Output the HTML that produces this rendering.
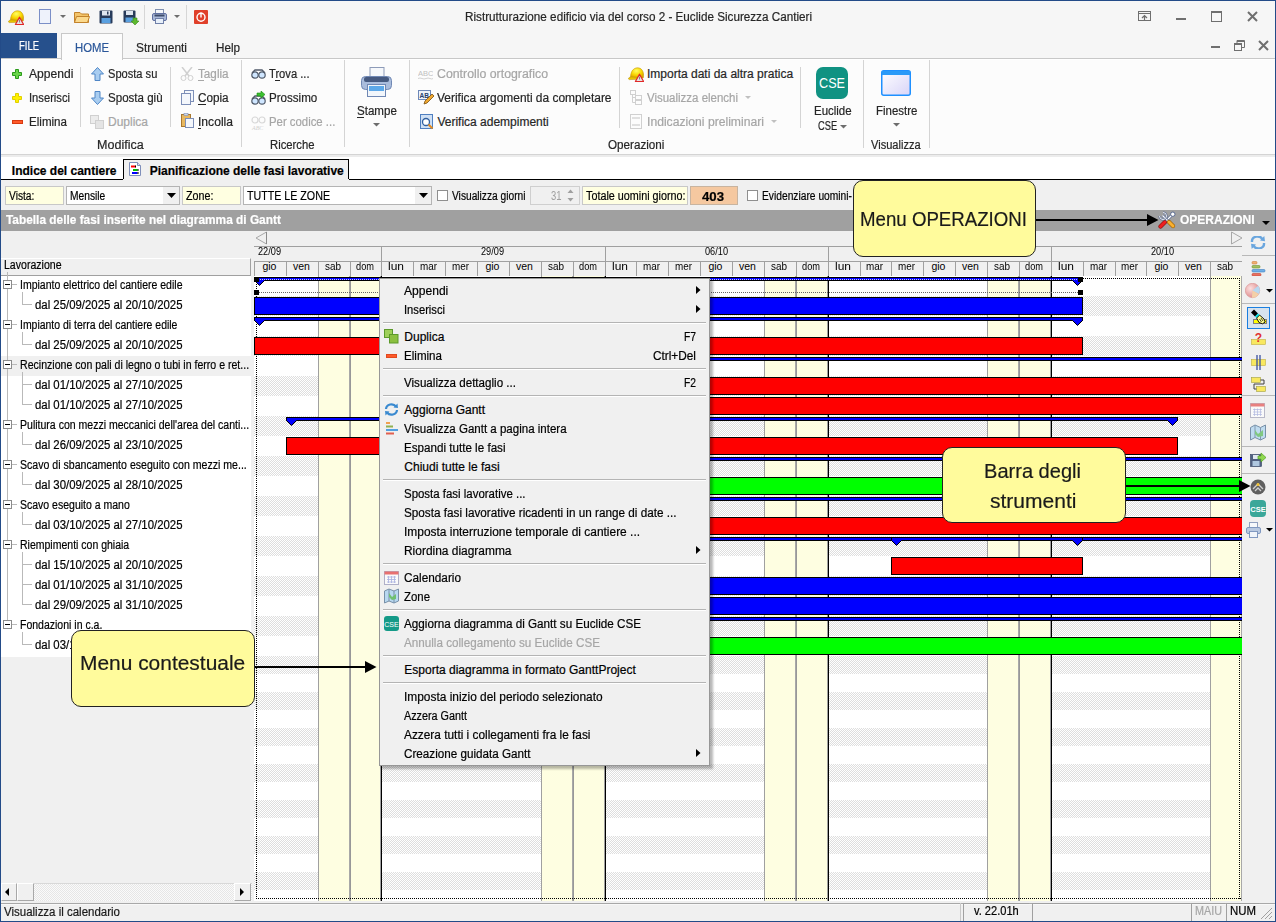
<!DOCTYPE html>
<html><head><meta charset="utf-8"><style>
html,body{margin:0;padding:0;}
body{width:1276px;height:922px;overflow:hidden;position:relative;background:#f0f0f0;font-family:"Liberation Sans",sans-serif;}
div,span,svg{position:absolute;box-sizing:border-box;}
.t{white-space:pre;display:block;-webkit-text-stroke:0.2px currentColor;}
</style></head><body>
<div style="left:0px;top:0px;width:1276px;height:59px;background:#f6f6f6"></div>
<div style="left:0px;top:59px;width:1276px;height:95px;background:#fcfcfc"></div>
<div style="left:0px;top:59px;width:1276px;height:1px;background:#ffffff"></div>
<div style="left:0px;top:154px;width:1276px;height:1px;background:#d4d4d4"></div>
<div style="left:0px;top:155px;width:1276px;height:2px;background:#ececec"></div>
<div style="left:0px;top:157px;width:1276px;height:22px;background:#ffffff"></div>
<span class="t" style="left:465.00px;top:11.24px;font-size:12px;line-height:12px;color:#262626;transform:scaleX(0.9743);transform-origin:0 0;">Ristrutturazione edificio via del corso 2 - Euclide Sicurezza Cantieri</span>
<div style="left:1px;top:33px;width:56px;height:26px;background:#26508c"></div>
<span class="t" style="left:19.00px;top:40.44px;font-size:12px;line-height:12px;color:#ffffff;transform:scaleX(0.7892);transform-origin:0 0;">FILE</span>
<div style="left:61px;top:33px;width:62px;height:27px;background:#fcfcfc;border:1px solid #c8c8c8;border-bottom:none"></div>
<span class="t" style="left:75.00px;top:42.04px;font-size:12px;line-height:12px;color:#2b579a;transform:scaleX(0.9444);transform-origin:0 0;">HOME</span>
<span class="t" style="left:136.00px;top:42.04px;font-size:12px;line-height:12px;color:#262626;transform:scaleX(0.9931);transform-origin:0 0;">Strumenti</span>
<span class="t" style="left:215.70px;top:42.04px;font-size:12px;line-height:12px;color:#262626;transform:scaleX(0.9724);transform-origin:0 0;">Help</span>
<div style="left:1px;top:58px;width:60px;height:1px;background:#c8c8c8"></div>
<div style="left:123px;top:58px;width:1152px;height:1px;background:#c8c8c8"></div>
<svg style="left:1138px;top:11px;" width="13" height="10" viewBox="0 0 13 10"><rect x="0.5" y="0.5" width="12" height="9" fill="none" stroke="#6f6f6f"/><line x1="0" y1="2.5" x2="13" y2="2.5" stroke="#6f6f6f"/><path d="M6.5 9.5V4.5M4 7l2.5-2.5L9 7" fill="none" stroke="#6f6f6f" stroke-width="1.2"/></svg>
<div style="left:1176px;top:18px;width:10px;height:2px;background:#6f6f6f"></div>
<svg style="left:1211px;top:11px;" width="11" height="11" viewBox="0 0 11 11"><rect x="0.5" y="1" width="10" height="9.5" fill="none" stroke="#6f6f6f"/><rect x="0" y="0" width="11" height="2" fill="#6f6f6f"/></svg>
<svg style="left:1247px;top:11px;" width="11" height="11" viewBox="0 0 11 11"><path d="M1 1L10 10M10 1L1 10" stroke="#6f6f6f" stroke-width="2"/></svg>
<div style="left:1211px;top:46px;width:9px;height:2px;background:#6f6f6f"></div>
<svg style="left:1234px;top:40px;" width="11" height="11" viewBox="0 0 11 11"><rect x="0.5" y="3.5" width="7" height="7" fill="none" stroke="#6f6f6f"/><path d="M3 3.5V0.5H10.5V7.5H7.5" fill="none" stroke="#6f6f6f"/><line x1="3" y1="1.5" x2="10" y2="1.5" stroke="#6f6f6f"/><line x1="0.5" y1="4.5" x2="7.5" y2="4.5" stroke="#6f6f6f"/></svg>
<svg style="left:1258px;top:40px;" width="11" height="11" viewBox="0 0 11 11"><path d="M1 1L10 10M10 1L1 10" stroke="#6f6f6f" stroke-width="2"/></svg>
<svg style="left:8px;top:10px;" width="16" height="15" viewBox="0 0 16 15"><defs><radialGradient id="hg" cx="0.45" cy="0.3" r="0.7"><stop offset="0" stop-color="#ffff60"/><stop offset="0.6" stop-color="#f8d400"/><stop offset="1" stop-color="#d8a000"/></radialGradient></defs><path d="M2.5 10.5C2.5 4.5 5.5 0.8 9.5 0.8C13.5 0.8 15.6 4.2 15.6 8.5L15.2 11Z" fill="url(#hg)" stroke="#c89800" stroke-width="0.6"/><path d="M0.3 11.8Q0.8 9.8 3.5 10L13 10.6V12.2L1.2 12.6Z" fill="#e8c400" stroke="#b88a00" stroke-width="0.5"/><path d="M11.5 7.2L15.6 14.5H7.4Z" fill="#e4e4e4" stroke="#e02828" stroke-width="1.2" stroke-linejoin="round"/><path d="M11.5 9.5V12.5" stroke="#888" stroke-width="1"/></svg>
<svg style="left:39px;top:9px;" width="12" height="15" viewBox="0 0 12 15"><rect x="0.5" y="0.5" width="11" height="14" fill="#eef2fb" stroke="#7b8fc7"/></svg>
<svg style="left:60px;top:15px;" width="6" height="4" viewBox="0 0 6 4"><path d="M0 0H6L3 3Z" fill="#6d6d6d"/></svg>
<svg style="left:74px;top:11px;" width="16" height="12" viewBox="0 0 16 12"><path d="M0.5 1.5H6L7.5 3H14.5V11.5H0.5Z" fill="#f3c46a" stroke="#c2822b"/><path d="M2.5 5.5H15.5L13.5 11.5H0.5Z" fill="#fbd98c" stroke="#c2822b"/></svg>
<svg style="left:99px;top:10px;" width="14" height="14" viewBox="0 0 14 14"><rect x="0.5" y="0.5" width="13" height="13" rx="1" fill="#283b5a"/><rect x="3" y="1" width="8" height="4.5" fill="#dfe6f0"/><rect x="8" y="1.5" width="1.5" height="3" fill="#283b5a"/><rect x="2.5" y="8" width="9" height="5" fill="#5aa0e0"/></svg>
<svg style="left:123px;top:10px;" width="16" height="15" viewBox="0 0 16 15"><rect x="0.5" y="0.5" width="12" height="12" rx="1" fill="#283b5a"/><rect x="3" y="1" width="7" height="4" fill="#dfe6f0"/><rect x="2.5" y="7.5" width="8" height="4.5" fill="#5aa0e0"/><path d="M10 8H14V11H16L12 15L8 11H10Z" fill="#5cb82e" stroke="#3b8a1a" stroke-width="0.6"/></svg>
<div style="left:144px;top:5px;width:1px;height:24px;background:#d6d6d6"></div>
<svg style="left:152px;top:9px;" width="15" height="15" viewBox="0 0 15 15"><rect x="3.5" y="0.5" width="8" height="5" fill="#f4f6fa" stroke="#8090b0"/><rect x="0.5" y="4.5" width="14" height="7" rx="1.5" fill="#a8b8d8" stroke="#6070a0"/><rect x="2.5" y="5.5" width="10" height="2" fill="#3c4a6a"/><rect x="3.5" y="9.5" width="8" height="5" fill="#e8f0fa" stroke="#7080a8"/></svg>
<svg style="left:174px;top:15px;" width="6" height="4" viewBox="0 0 6 4"><path d="M0 0H6L3 3Z" fill="#6d6d6d"/></svg>
<div style="left:186px;top:5px;width:1px;height:24px;background:#d6d6d6"></div>
<svg style="left:194px;top:10px;" width="14" height="14" viewBox="0 0 14 14"><rect x="0" y="0" width="14" height="14" rx="1" fill="#e0402a"/><circle cx="7" cy="7.3" r="4" fill="none" stroke="#fff" stroke-width="1.4"/><rect x="6.3" y="2.5" width="1.4" height="5" fill="#fff"/></svg>
<svg style="left:12px;top:69px;" width="10" height="10" viewBox="0 0 10 10"><path d="M3.5 0.5H6.5V3.5H9.5V6.5H6.5V9.5H3.5V6.5H0.5V3.5H3.5Z" fill="#6ad64a" stroke="#2a9a1a"/></svg>
<span class="t" style="left:28.50px;top:67.54px;font-size:12px;line-height:12px;color:#262626;transform:scaleX(1.0082);transform-origin:0 0;">Appendi</span>
<svg style="left:12px;top:93px;" width="10" height="10" viewBox="0 0 10 10"><path d="M3.5 0.5H6.5V3.5H9.5V6.5H6.5V9.5H3.5V6.5H0.5V3.5H3.5Z" fill="#fff000" stroke="#e0d000"/></svg>
<span class="t" style="left:28.50px;top:91.54px;font-size:12px;line-height:12px;color:#262626;transform:scaleX(0.9316);transform-origin:0 0;">Inserisci</span>
<svg style="left:12px;top:120px;" width="11" height="4" viewBox="0 0 11 4"><rect x="0.5" y="0.5" width="10" height="3" fill="#ff5a2a" stroke="#d83a10"/></svg>
<span class="t" style="left:28.50px;top:115.54px;font-size:12px;line-height:12px;color:#262626;transform:scaleX(0.9657);transform-origin:0 0;">Elimina</span>
<div style="left:80px;top:67px;width:1px;height:60px;background:#d4d4d4"></div>
<svg style="left:91px;top:67px;" width="13" height="14" viewBox="0 0 13 14"><path d="M6.5 0.5L12.5 7H9V13.5H4V7H0.5Z" fill="#a9cdf0" stroke="#4f86c6"/></svg>
<span class="t" style="left:108.00px;top:67.54px;font-size:12px;line-height:12px;color:#262626;transform:scaleX(0.9238);transform-origin:0 0;">Sposta su</span>
<svg style="left:91px;top:91px;" width="13" height="14" viewBox="0 0 13 14"><path d="M6.5 13.5L12.5 7H9V0.5H4V7H0.5Z" fill="#a9cdf0" stroke="#4f86c6"/></svg>
<span class="t" style="left:108.00px;top:91.54px;font-size:12px;line-height:12px;color:#262626;transform:scaleX(0.9628);transform-origin:0 0;">Sposta giù</span>
<svg style="left:90px;top:115px;" width="14" height="14" viewBox="0 0 14 14"><rect x="0.5" y="0.5" width="8" height="8" fill="#ececec" stroke="#d0d0d0"/><rect x="5.5" y="5.5" width="8" height="8" fill="#e4e4e4" stroke="#d0d0d0"/></svg>
<span class="t" style="left:108.00px;top:115.54px;font-size:12px;line-height:12px;color:#a6a6a6;">Duplica</span>
<div style="left:170px;top:67px;width:1px;height:60px;background:#d4d4d4"></div>
<svg style="left:180px;top:67px;" width="14" height="14" viewBox="0 0 14 14"><path d="M2 0L9 9M12 0L5 9" stroke="#d0d0d0" stroke-width="1.5"/><circle cx="3.5" cy="11" r="2.5" fill="none" stroke="#d0d0d0"/><circle cx="10.5" cy="11" r="2.5" fill="none" stroke="#d0d0d0"/></svg>
<span class="t" style="left:198.00px;top:67.54px;font-size:12px;line-height:12px;color:#a6a6a6;transform:scaleX(0.9759);transform-origin:0 0;">Taglia</span>
<svg style="left:181px;top:90px;" width="13" height="15" viewBox="0 0 13 15"><rect x="3.5" y="0.5" width="9" height="11" fill="#f4f7fc" stroke="#7d8fb8"/><rect x="0.5" y="3.5" width="9" height="11" fill="#f4f7fc" stroke="#7d8fb8"/></svg>
<span class="t" style="left:198.00px;top:91.54px;font-size:12px;line-height:12px;color:#262626;transform:scaleX(0.9759);transform-origin:0 0;">Copia</span>
<svg style="left:181px;top:113px;" width="13" height="15" viewBox="0 0 13 15"><rect x="0.5" y="1.5" width="9" height="12" fill="#e8b860" stroke="#a87830"/><rect x="3" y="0.5" width="4" height="2" fill="#d0d8e8" stroke="#7d8fb8" stroke-width="0.6"/><rect x="4.5" y="5.5" width="8" height="9" fill="#f4f7fc" stroke="#7d8fb8"/></svg>
<span class="t" style="left:198.00px;top:115.54px;font-size:12px;line-height:12px;color:#262626;transform:scaleX(1.0090);transform-origin:0 0;">Incolla</span>
<div style="left:198px;top:79.7px;width:6px;height:1px;background:#a6a6a6"></div>
<div style="left:198px;top:103.7px;width:8px;height:1px;background:#262626"></div>
<div style="left:198px;top:127.7px;width:3px;height:1px;background:#262626"></div>
<div style="left:241px;top:60px;width:1px;height:87px;background:#d4d4d4"></div>
<svg style="left:251px;top:69px;" width="15" height="10" viewBox="0 0 15 10"><circle cx="4" cy="6" r="3.2" fill="#cfe6ff" stroke="#505a6a" stroke-width="1.2"/><circle cx="11" cy="6" r="3.2" fill="#cfe6ff" stroke="#505a6a" stroke-width="1.2"/><path d="M1 4L4 1H11L14 4" fill="none" stroke="#505a6a" stroke-width="1.4"/></svg>
<span class="t" style="left:269.30px;top:67.54px;font-size:12px;line-height:12px;color:#262626;transform:scaleX(0.9297);transform-origin:0 0;">Trova ...</span>
<div style="left:275px;top:79.7px;width:5px;height:1px;background:#262626"></div>
<svg style="left:251px;top:91px;" width="15" height="14" viewBox="0 0 15 14"><circle cx="4" cy="10" r="3.2" fill="#cfe6ff" stroke="#505a6a" stroke-width="1.2"/><circle cx="11" cy="10" r="3.2" fill="#cfe6ff" stroke="#505a6a" stroke-width="1.2"/><path d="M1 8L4 5H11L14 8" fill="none" stroke="#505a6a" stroke-width="1.4"/><path d="M6 2H10V0L14 3.5L10 7V5H6Z" fill="#3cc030" stroke="#1a8a10" stroke-width="0.6"/></svg>
<span class="t" style="left:269.30px;top:91.54px;font-size:12px;line-height:12px;color:#262626;transform:scaleX(0.9658);transform-origin:0 0;">Prossimo</span>
<svg style="left:251px;top:115px;" width="15" height="15" viewBox="0 0 15 15"><circle cx="4" cy="5" r="3" fill="none" stroke="#d8d8d8" stroke-width="1.2"/><circle cx="11" cy="5" r="3" fill="none" stroke="#d8d8d8" stroke-width="1.2"/><text x="1" y="14.5" font-size="6" fill="#d0d0d0" font-family="Liberation Serif" font-style="italic">ABC</text></svg>
<span class="t" style="left:269.30px;top:115.54px;font-size:12px;line-height:12px;color:#a6a6a6;transform:scaleX(0.9467);transform-origin:0 0;">Per codice ...</span>
<span class="t" style="left:270.30px;top:139.04px;font-size:12px;line-height:12px;color:#262626;transform:scaleX(0.9398);transform-origin:0 0;">Ricerche</span>
<span class="t" style="left:97.00px;top:139.04px;font-size:12px;line-height:12px;color:#262626;transform:scaleX(1.0451);transform-origin:0 0;">Modifica</span>
<div style="left:344px;top:60px;width:1px;height:87px;background:#d4d4d4"></div>
<svg style="left:361px;top:67px;" width="31" height="30" viewBox="0 0 31 30"><rect x="9" y="0.5" width="14" height="10" fill="#f6f8fb" stroke="#8d9bb8"/><rect x="0.5" y="9.5" width="30" height="13" rx="4" fill="#a9bcdc" stroke="#7088b4"/><rect x="3" y="10" width="25" height="5" rx="2" fill="#465a80"/><rect x="6.5" y="17.5" width="18" height="12" fill="#f2f6fb" stroke="#7088b4"/><rect x="8" y="19" width="15" height="5" fill="#5da8e8"/></svg>
<span class="t" style="left:357.00px;top:104.84px;font-size:12px;line-height:12px;color:#262626;transform:scaleX(0.9624);transform-origin:0 0;">Stampe</span>
<div style="left:357px;top:117px;width:7px;height:1px;background:#262626"></div>
<svg style="left:373px;top:123px;" width="7" height="4" viewBox="0 0 7 4"><path d="M0 0H7L3.5 3.5Z" fill="#6d6d6d"/></svg>
<div style="left:409px;top:60px;width:1px;height:87px;background:#d4d4d4"></div>
<svg style="left:418px;top:68px;" width="15" height="12" viewBox="0 0 15 12"><text x="0" y="8" font-size="7.5" fill="#c0c0c0" font-family="Liberation Sans">ABC</text><path d="M0 10.5Q2 9.5 4 10.5T8 10.5T12 10.5T15 10.5" fill="none" stroke="#c8c8c8" stroke-width="0.8"/></svg>
<span class="t" style="left:437.40px;top:67.54px;font-size:12px;line-height:12px;color:#a6a6a6;transform:scaleX(1.0272);transform-origin:0 0;">Controllo ortografico</span>
<svg style="left:418px;top:90px;" width="16" height="15" viewBox="0 0 16 15"><rect x="0.5" y="0.5" width="12" height="9" fill="#eef3fb" stroke="#6d87b8"/><text x="1.5" y="7.5" font-size="6.5" font-weight="bold" fill="#25406e" font-family="Liberation Sans">AB</text><path d="M6 14L7 11L14 4L16 6L9 13Z" fill="#f0a830" stroke="#7a5010" stroke-width="0.8"/></svg>
<span class="t" style="left:437.40px;top:91.54px;font-size:12px;line-height:12px;color:#262626;transform:scaleX(0.9947);transform-origin:0 0;">Verifica argomenti da completare</span>
<svg style="left:420px;top:114px;" width="14" height="16" viewBox="0 0 14 16"><rect x="0.5" y="0.5" width="12" height="14" fill="#cfe0f4" stroke="#4f7fc0"/><circle cx="6" cy="8" r="3.5" fill="#fff" stroke="#2f5fa0" stroke-width="1.3"/><path d="M8.5 10.5L12.5 14.5" stroke="#e08a20" stroke-width="2"/></svg>
<span class="t" style="left:437.40px;top:115.54px;font-size:12px;line-height:12px;color:#262626;">Verifica adempimenti</span>
<div style="left:619px;top:67px;width:1px;height:61px;background:#d4d4d4"></div>
<svg style="left:628px;top:67px;" width="16" height="15" viewBox="0 0 16 15"><defs><radialGradient id="hg2" cx="0.45" cy="0.3" r="0.7"><stop offset="0" stop-color="#ffff60"/><stop offset="0.6" stop-color="#f8d400"/><stop offset="1" stop-color="#d8a000"/></radialGradient></defs><path d="M2.5 10.5C2.5 4.5 5.5 0.8 9.5 0.8C13.5 0.8 15.6 4.2 15.6 8.5L15.2 11Z" fill="url(#hg2)" stroke="#c89800" stroke-width="0.6"/><path d="M0.3 11.8Q0.8 9.8 3.5 10L13 10.6V12.2L1.2 12.6Z" fill="#e8c400" stroke="#b88a00" stroke-width="0.5"/><path d="M11.5 7.2L15.6 14.5H7.4Z" fill="#e4e4e4" stroke="#e02828" stroke-width="1.2" stroke-linejoin="round"/><path d="M11.5 9.5V12.5" stroke="#888" stroke-width="1"/></svg>
<span class="t" style="left:647.00px;top:67.54px;font-size:12px;line-height:12px;color:#262626;">Importa dati da altra pratica</span>
<svg style="left:630px;top:90px;" width="12" height="15" viewBox="0 0 12 15"><rect x="0.5" y="0.5" width="5" height="4" fill="none" stroke="#d0d0d0"/><rect x="5.5" y="5.5" width="6" height="4" fill="none" stroke="#d0d0d0"/><rect x="5.5" y="10.5" width="6" height="4" fill="none" stroke="#d0d0d0"/><path d="M2.5 4.5V12.5H5.5M2.5 7.5H5.5" fill="none" stroke="#d0d0d0"/></svg>
<span class="t" style="left:647.00px;top:91.54px;font-size:12px;line-height:12px;color:#a6a6a6;transform:scaleX(0.9562);transform-origin:0 0;">Visualizza elenchi</span>
<svg style="left:745px;top:96px;" width="6" height="3" viewBox="0 0 6 3"><path d="M0 0H6L3 3Z" fill="#c0c0c0"/></svg>
<svg style="left:630px;top:114px;" width="12" height="15" viewBox="0 0 12 15"><rect x="0.5" y="0.5" width="11" height="14" fill="none" stroke="#d0d0d0"/><rect x="2" y="3" width="8" height="2" fill="#e0e0e0"/><rect x="2" y="10" width="8" height="2" fill="#e0e0e0"/></svg>
<span class="t" style="left:647.00px;top:115.54px;font-size:12px;line-height:12px;color:#a6a6a6;transform:scaleX(1.0140);transform-origin:0 0;">Indicazioni preliminari</span>
<svg style="left:771px;top:120px;" width="6" height="3" viewBox="0 0 6 3"><path d="M0 0H6L3 3Z" fill="#c0c0c0"/></svg>
<span class="t" style="left:608.40px;top:139.04px;font-size:12px;line-height:12px;color:#262626;transform:scaleX(0.9719);transform-origin:0 0;">Operazioni</span>
<div style="left:800px;top:67px;width:1px;height:61px;background:#d4d4d4"></div>
<svg style="left:816px;top:67px;" width="32" height="32" viewBox="0 0 32 32"><rect x="0" y="0" width="32" height="32" rx="7" fill="#109282"/><text x="3" y="21" font-size="14.5" fill="#fff" textLength="26" lengthAdjust="spacingAndGlyphs" font-family="Liberation Sans">CSE</text></svg>
<span class="t" style="left:813.60px;top:104.84px;font-size:12px;line-height:12px;color:#262626;transform:scaleX(0.9553);transform-origin:0 0;">Euclide</span>
<span class="t" style="left:817.60px;top:119.84px;font-size:12px;line-height:12px;color:#262626;transform:scaleX(0.7741);transform-origin:0 0;">CSE</span>
<svg style="left:840px;top:125px;" width="7" height="4" viewBox="0 0 7 4"><path d="M0 0H7L3.5 3.5Z" fill="#6d6d6d"/></svg>
<div style="left:863px;top:60px;width:1px;height:88px;background:#d4d4d4"></div>
<svg style="left:881px;top:70px;" width="30" height="26" viewBox="0 0 30 26"><defs><linearGradient id="fg" x1="0" y1="0" x2="1" y2="1"><stop offset="0" stop-color="#ffffff"/><stop offset="1" stop-color="#d8d4f8"/></linearGradient></defs><rect x="0.75" y="0.75" width="28.5" height="24.5" rx="2" fill="url(#fg)" stroke="#1e90ff" stroke-width="1.5"/><rect x="1" y="1" width="28" height="4" fill="#2a9af8"/></svg>
<span class="t" style="left:876.00px;top:104.84px;font-size:12px;line-height:12px;color:#262626;transform:scaleX(0.9527);transform-origin:0 0;">Finestre</span>
<svg style="left:893px;top:123px;" width="7" height="4" viewBox="0 0 7 4"><path d="M0 0H7L3.5 3.5Z" fill="#6d6d6d"/></svg>
<span class="t" style="left:871.00px;top:139.04px;font-size:12px;line-height:12px;color:#262626;transform:scaleX(0.9218);transform-origin:0 0;">Visualizza</span>
<div style="left:929px;top:60px;width:1px;height:88px;background:#d4d4d4"></div>
<div style="left:1px;top:179px;width:123px;height:1px;background:#000"></div>
<div style="left:349px;top:179px;width:926px;height:1px;background:#000"></div>
<span class="t" style="left:11.80px;top:164.64px;font-size:12px;line-height:12px;color:#000;font-weight:bold;">Indice del cantiere</span>
<div style="left:123px;top:159px;width:226px;height:27px;background:#f0f0f0;border:1px solid #000;border-bottom:none"></div>
<svg style="left:129px;top:162px;" width="12" height="14" viewBox="0 0 12 14"><path d="M0.5 0.5H8.5L11.5 3.5V13.5H0.5Z" fill="#fff" stroke="#7f8fba"/><path d="M8.5 0.5V3.5H11.5" fill="#dde" stroke="#7f8fba"/><rect x="2" y="3.5" width="4.5" height="2" fill="#ff0000"/><rect x="6" y="3.5" width="1" height="2" fill="#000"/><rect x="4" y="7" width="4.5" height="2" fill="#00c000"/><rect x="8.5" y="7" width="1" height="2" fill="#000"/><rect x="3" y="10" width="5.5" height="2" fill="#0000ff"/><rect x="8.5" y="10" width="1" height="2" fill="#000"/></svg>
<span class="t" style="left:149.70px;top:164.64px;font-size:12px;line-height:12px;color:#000;font-weight:bold;">Pianificazione delle fasi lavorative</span>
<div style="left:1px;top:180px;width:1274px;height:30px;background:#f0f0f0"></div>
<div style="left:123px;top:179px;width:226px;height:2px;background:#f0f0f0"></div>
<div style="left:5px;top:186px;width:59px;height:19px;background:#ffffe1;border:1px solid #c8c8c8"></div>
<span class="t" style="left:9.10px;top:189.82px;font-size:12.5px;line-height:12.5px;color:#000;transform:scaleX(0.8184);transform-origin:0 0;">Vista:</span>
<div style="left:66px;top:186px;width:114px;height:19px;background:#fff;border:1px solid #b4b4b4"></div>
<div style="left:163px;top:187px;width:16px;height:17px;background:#f0f0f0"></div>
<svg style="left:167px;top:193px;" width="9" height="5" viewBox="0 0 9 5"><path d="M0 0H9L4.5 5Z" fill="#000"/></svg>
<span class="t" style="left:69.70px;top:189.82px;font-size:12.5px;line-height:12.5px;color:#000;transform:scaleX(0.8195);transform-origin:0 0;">Mensile</span>
<div style="left:182px;top:186px;width:59px;height:19px;background:#ffffe1;border:1px solid #c8c8c8"></div>
<span class="t" style="left:185.80px;top:189.82px;font-size:12.5px;line-height:12.5px;color:#000;transform:scaleX(0.8572);transform-origin:0 0;">Zone:</span>
<div style="left:243px;top:186px;width:189px;height:19px;background:#fff;border:1px solid #b4b4b4"></div>
<div style="left:415px;top:187px;width:16px;height:17px;background:#f0f0f0"></div>
<svg style="left:419px;top:193px;" width="9" height="5" viewBox="0 0 9 5"><path d="M0 0H9L4.5 5Z" fill="#000"/></svg>
<span class="t" style="left:246.80px;top:189.82px;font-size:12.5px;line-height:12.5px;color:#000;transform:scaleX(0.8536);transform-origin:0 0;">TUTTE LE ZONE</span>
<div style="left:437px;top:190px;width:11px;height:11px;background:#fff;border:1px solid #8f8f8f"></div>
<span class="t" style="left:452.40px;top:189.82px;font-size:12.5px;line-height:12.5px;color:#000;transform:scaleX(0.8158);transform-origin:0 0;">Visualizza giorni</span>
<div style="left:530px;top:186px;width:50px;height:19px;background:#f0f0f0;border:1px solid #cfcfcf"></div>
<span class="t" style="left:550.50px;top:189.82px;font-size:12.5px;line-height:12.5px;color:#a0a0a0;transform:scaleX(0.7552);transform-origin:0 0;-webkit-text-stroke:0;">31</span>
<svg style="left:567px;top:188px;" width="7" height="15" viewBox="0 0 7 15"><path d="M0.5 5L3.5 1.5L6.5 5Z" fill="#a0a0a0"/><path d="M0.5 10L3.5 13.5L6.5 10Z" fill="#a0a0a0"/></svg>
<div style="left:582px;top:186px;width:106px;height:19px;background:#ffffe1;border:1px solid #c8c8c8"></div>
<span class="t" style="left:585.50px;top:189.82px;font-size:12.5px;line-height:12.5px;color:#000;transform:scaleX(0.8626);transform-origin:0 0;">Totale uomini giorno:</span>
<div style="left:690px;top:186px;width:48px;height:19px;background:#f5c8a0;border:1px solid #c8b4a0"></div>
<span class="t" style="left:701.70px;top:190.54px;font-size:12px;line-height:12px;color:#000;font-weight:bold;transform:scaleX(1.0988);transform-origin:0 0;">403</span>
<div style="left:747px;top:190px;width:11px;height:11px;background:#fff;border:1px solid #8f8f8f"></div>
<span class="t" style="left:761.70px;top:189.82px;font-size:12.5px;line-height:12.5px;color:#000;transform:scaleX(0.8198);transform-origin:0 0;">Evidenziare uomini-</span>
<div style="left:1px;top:210px;width:1274px;height:21px;background:#a0a0a0"></div>
<span class="t" style="left:6.30px;top:214.33px;font-size:12.6px;line-height:12.6px;color:#ffffff;font-weight:bold;transform:scaleX(0.9426);transform-origin:0 0;">Tabella delle fasi inserite nel diagramma di Gantt</span>
<svg style="left:1158px;top:211px;" width="18" height="18" viewBox="0 0 18 18"><path d="M8.5 9.5L14 4" stroke="#5a6a90" stroke-width="2.6" stroke-linecap="round"/><path d="M8.5 9.5L14 4" stroke="#ffffff" stroke-width="1.2" stroke-linecap="round"/><circle cx="14.8" cy="3.2" r="2.2" fill="#fff" stroke="#5a6a90" stroke-width="1"/><path d="M2.5 15.5L7 11" stroke="#901010" stroke-width="4.2" stroke-linecap="round"/><path d="M2.5 15.5L7 11" stroke="#ee2020" stroke-width="3" stroke-linecap="round"/><path d="M4.5 4.5L10 10" stroke="#5a6a90" stroke-width="2.6"/><path d="M4.5 4.5L10 10" stroke="#fff" stroke-width="1.2"/><path d="M1.5 5A3.5 3.5 0 1 0 5 1.5" fill="none" stroke="#5a6a90" stroke-width="2.2"/><path d="M1.5 5A3.5 3.5 0 1 0 5 1.5" fill="none" stroke="#fff" stroke-width="0.9"/><path d="M11 11L15 15" stroke="#a06000" stroke-width="4.2" stroke-linecap="round"/><path d="M11 11L15 15" stroke="#f8b030" stroke-width="3" stroke-linecap="round"/></svg>
<span class="t" style="left:1180.00px;top:212.99px;font-size:13px;line-height:13px;color:#ffffff;font-weight:bold;transform:scaleX(0.9222);transform-origin:0 0;">OPERAZIONI</span>
<svg style="left:1262px;top:221px;" width="8" height="4" viewBox="0 0 8 4"><path d="M0 0H8L4 4Z" fill="#000"/></svg>
<div style="left:1px;top:231px;width:251px;height:652px;background:#f0f0f0"></div>
<div style="left:1px;top:258px;width:250px;height:18px;background:#f0f0f0;border-top:1px solid #fff;border-right:1px solid #a0a0a0;border-bottom:1px solid #a0a0a0"></div>
<span class="t" style="left:3.50px;top:259.22px;font-size:12.5px;line-height:12.5px;color:#000;transform:scaleX(0.8443);transform-origin:0 0;">Lavorazione</span>
<div style="left:1px;top:276px;width:251px;height:381px;background:#fff"></div>
<div style="left:1px;top:356px;width:250px;height:20px;background:#f0f0f0"></div>
<div style="left:7px;top:272px;width:1px;height:348px;background:#b9b9b9"></div>
<div style="left:3px;top:280px;width:9px;height:9px;background:#fff;border:1px solid #8c8c8c"></div>
<div style="left:5px;top:284px;width:5px;height:1px;background:#000"></div>
<div style="left:12px;top:284px;width:5px;height:1px;background:#b9b9b9"></div>
<span class="t" style="left:19.50px;top:279.12px;font-size:12.5px;line-height:12.5px;color:#000;transform:scaleX(0.8412);transform-origin:0 0;">Impianto elettrico del cantiere edile</span>
<div style="left:22px;top:304px;width:10px;height:1px;background:#b9b9b9"></div>
<span class="t" style="left:34.50px;top:299.12px;font-size:12.5px;line-height:12.5px;color:#000;transform:scaleX(0.9108);transform-origin:0 0;">dal 25/09/2025 al 20/10/2025</span>
<div style="left:3px;top:320px;width:9px;height:9px;background:#fff;border:1px solid #8c8c8c"></div>
<div style="left:5px;top:324px;width:5px;height:1px;background:#000"></div>
<div style="left:12px;top:324px;width:5px;height:1px;background:#b9b9b9"></div>
<span class="t" style="left:19.50px;top:319.12px;font-size:12.5px;line-height:12.5px;color:#000;transform:scaleX(0.8359);transform-origin:0 0;">Impianto di terra del cantiere edile</span>
<div style="left:22px;top:344px;width:10px;height:1px;background:#b9b9b9"></div>
<span class="t" style="left:34.50px;top:339.12px;font-size:12.5px;line-height:12.5px;color:#000;transform:scaleX(0.9108);transform-origin:0 0;">dal 25/09/2025 al 20/10/2025</span>
<div style="left:3px;top:360px;width:9px;height:9px;background:#fff;border:1px solid #8c8c8c"></div>
<div style="left:5px;top:364px;width:5px;height:1px;background:#000"></div>
<div style="left:12px;top:364px;width:5px;height:1px;background:#b9b9b9"></div>
<span class="t" style="left:19.50px;top:359.12px;font-size:12.5px;line-height:12.5px;color:#000;transform:scaleX(0.8454);transform-origin:0 0;">Recinzione con pali di legno o tubi in ferro e ret...</span>
<div style="left:22px;top:384px;width:10px;height:1px;background:#b9b9b9"></div>
<span class="t" style="left:34.50px;top:379.12px;font-size:12.5px;line-height:12.5px;color:#000;transform:scaleX(0.9108);transform-origin:0 0;">dal 01/10/2025 al 27/10/2025</span>
<div style="left:22px;top:404px;width:10px;height:1px;background:#b9b9b9"></div>
<span class="t" style="left:34.50px;top:399.12px;font-size:12.5px;line-height:12.5px;color:#000;transform:scaleX(0.9108);transform-origin:0 0;">dal 01/10/2025 al 27/10/2025</span>
<div style="left:3px;top:420px;width:9px;height:9px;background:#fff;border:1px solid #8c8c8c"></div>
<div style="left:5px;top:424px;width:5px;height:1px;background:#000"></div>
<div style="left:12px;top:424px;width:5px;height:1px;background:#b9b9b9"></div>
<span class="t" style="left:19.50px;top:419.12px;font-size:12.5px;line-height:12.5px;color:#000;transform:scaleX(0.8424);transform-origin:0 0;">Pulitura con mezzi meccanici dell'area del canti...</span>
<div style="left:22px;top:444px;width:10px;height:1px;background:#b9b9b9"></div>
<span class="t" style="left:34.50px;top:439.12px;font-size:12.5px;line-height:12.5px;color:#000;transform:scaleX(0.9108);transform-origin:0 0;">dal 26/09/2025 al 23/10/2025</span>
<div style="left:3px;top:460px;width:9px;height:9px;background:#fff;border:1px solid #8c8c8c"></div>
<div style="left:5px;top:464px;width:5px;height:1px;background:#000"></div>
<div style="left:12px;top:464px;width:5px;height:1px;background:#b9b9b9"></div>
<span class="t" style="left:19.50px;top:459.12px;font-size:12.5px;line-height:12.5px;color:#000;transform:scaleX(0.8456);transform-origin:0 0;">Scavo di sbancamento eseguito con mezzi me...</span>
<div style="left:22px;top:484px;width:10px;height:1px;background:#b9b9b9"></div>
<span class="t" style="left:34.50px;top:479.12px;font-size:12.5px;line-height:12.5px;color:#000;transform:scaleX(0.9108);transform-origin:0 0;">dal 30/09/2025 al 28/10/2025</span>
<div style="left:3px;top:500px;width:9px;height:9px;background:#fff;border:1px solid #8c8c8c"></div>
<div style="left:5px;top:504px;width:5px;height:1px;background:#000"></div>
<div style="left:12px;top:504px;width:5px;height:1px;background:#b9b9b9"></div>
<span class="t" style="left:19.50px;top:499.12px;font-size:12.5px;line-height:12.5px;color:#000;transform:scaleX(0.8404);transform-origin:0 0;">Scavo eseguito a mano</span>
<div style="left:22px;top:524px;width:10px;height:1px;background:#b9b9b9"></div>
<span class="t" style="left:34.50px;top:519.12px;font-size:12.5px;line-height:12.5px;color:#000;transform:scaleX(0.9108);transform-origin:0 0;">dal 03/10/2025 al 27/10/2025</span>
<div style="left:3px;top:540px;width:9px;height:9px;background:#fff;border:1px solid #8c8c8c"></div>
<div style="left:5px;top:544px;width:5px;height:1px;background:#000"></div>
<div style="left:12px;top:544px;width:5px;height:1px;background:#b9b9b9"></div>
<span class="t" style="left:19.50px;top:539.12px;font-size:12.5px;line-height:12.5px;color:#000;transform:scaleX(0.8404);transform-origin:0 0;">Riempimenti con ghiaia</span>
<div style="left:22px;top:564px;width:10px;height:1px;background:#b9b9b9"></div>
<span class="t" style="left:34.50px;top:559.12px;font-size:12.5px;line-height:12.5px;color:#000;transform:scaleX(0.9108);transform-origin:0 0;">dal 15/10/2025 al 20/10/2025</span>
<div style="left:22px;top:584px;width:10px;height:1px;background:#b9b9b9"></div>
<span class="t" style="left:34.50px;top:579.12px;font-size:12.5px;line-height:12.5px;color:#000;transform:scaleX(0.9108);transform-origin:0 0;">dal 01/10/2025 al 31/10/2025</span>
<div style="left:22px;top:604px;width:10px;height:1px;background:#b9b9b9"></div>
<span class="t" style="left:34.50px;top:599.12px;font-size:12.5px;line-height:12.5px;color:#000;transform:scaleX(0.9108);transform-origin:0 0;">dal 29/09/2025 al 31/10/2025</span>
<div style="left:3px;top:620px;width:9px;height:9px;background:#fff;border:1px solid #8c8c8c"></div>
<div style="left:5px;top:624px;width:5px;height:1px;background:#000"></div>
<div style="left:12px;top:624px;width:5px;height:1px;background:#b9b9b9"></div>
<span class="t" style="left:19.50px;top:619.12px;font-size:12.5px;line-height:12.5px;color:#000;transform:scaleX(0.8404);transform-origin:0 0;">Fondazioni in c.a.</span>
<div style="left:22px;top:644px;width:10px;height:1px;background:#b9b9b9"></div>
<span class="t" style="left:34.50px;top:639.12px;font-size:12.5px;line-height:12.5px;color:#000;transform:scaleX(0.9108);transform-origin:0 0;">dal 03/10/2025 al 27/10/2025</span>
<div style="left:22px;top:292px;width:1px;height:13px;background:#b9b9b9"></div>
<div style="left:22px;top:332px;width:1px;height:13px;background:#b9b9b9"></div>
<div style="left:22px;top:372px;width:1px;height:33px;background:#b9b9b9"></div>
<div style="left:22px;top:432px;width:1px;height:13px;background:#b9b9b9"></div>
<div style="left:22px;top:472px;width:1px;height:13px;background:#b9b9b9"></div>
<div style="left:22px;top:512px;width:1px;height:13px;background:#b9b9b9"></div>
<div style="left:22px;top:552px;width:1px;height:53px;background:#b9b9b9"></div>
<div style="left:22px;top:632px;width:1px;height:13px;background:#b9b9b9"></div>
<div style="left:251px;top:231px;width:3px;height:652px;background:#f0f0f0"></div>
<div style="left:1px;top:883px;width:251px;height:18px;background-color:#f4f4f4;background-image:repeating-conic-gradient(#e6e6e6 0% 25%, #fafafa 0% 50%);background-size:2px 2px;border-top:1px solid #d8d8d8"></div>
<div style="left:1px;top:883px;width:16px;height:18px;background:#f0f0f0;border:1px solid #a8a8a8;border-left-color:#fff;border-top-color:#fff"></div>
<svg style="left:5px;top:888px;" width="5" height="8" viewBox="0 0 5 8"><path d="M4 0V8L0 4Z" fill="#000"/></svg>
<div style="left:17px;top:883px;width:17px;height:18px;background:#f0f0f0;border:1px solid #a8a8a8;border-left-color:#fff;border-top-color:#fff"></div>
<div style="left:234px;top:883px;width:17px;height:18px;background:#f0f0f0;border:1px solid #a8a8a8;border-left-color:#fff;border-top-color:#fff"></div>
<svg style="left:240px;top:888px;" width="5" height="8" viewBox="0 0 5 8"><path d="M0 0V8L4 4Z" fill="#000"/></svg>
<div style="left:252px;top:231px;width:990px;height:45px;background:#f0f0f0"></div>
<svg style="left:255px;top:231px;" width="13" height="14" viewBox="0 0 13 14"><path d="M11.5 1V13L1 7Z" fill="none" stroke="#a8a8a8"/><path d="M11.5 1V13" stroke="#8a8a8a"/></svg>
<svg style="left:1230px;top:231px;" width="13" height="14" viewBox="0 0 13 14"><path d="M1.5 1V13L12 7Z" fill="none" stroke="#a8a8a8"/></svg>
<div style="left:254px;top:246px;width:988px;height:1px;background:#a0a0a0"></div>
<div style="left:254px;top:261px;width:988px;height:1px;background:#a0a0a0"></div>
<div style="left:254px;top:261px;width:1px;height:15px;background:#a0a0a0"></div>
<div style="left:286px;top:261px;width:1px;height:15px;background:#a0a0a0"></div>
<div style="left:318px;top:261px;width:1px;height:15px;background:#a0a0a0"></div>
<div style="left:350px;top:261px;width:1px;height:15px;background:#a0a0a0"></div>
<div style="left:381px;top:261px;width:1px;height:15px;background:#a0a0a0"></div>
<div style="left:413px;top:261px;width:1px;height:15px;background:#a0a0a0"></div>
<div style="left:445px;top:261px;width:1px;height:15px;background:#a0a0a0"></div>
<div style="left:477px;top:261px;width:1px;height:15px;background:#a0a0a0"></div>
<div style="left:509px;top:261px;width:1px;height:15px;background:#a0a0a0"></div>
<div style="left:541px;top:261px;width:1px;height:15px;background:#a0a0a0"></div>
<div style="left:573px;top:261px;width:1px;height:15px;background:#a0a0a0"></div>
<div style="left:605px;top:261px;width:1px;height:15px;background:#a0a0a0"></div>
<div style="left:636px;top:261px;width:1px;height:15px;background:#a0a0a0"></div>
<div style="left:668px;top:261px;width:1px;height:15px;background:#a0a0a0"></div>
<div style="left:700px;top:261px;width:1px;height:15px;background:#a0a0a0"></div>
<div style="left:732px;top:261px;width:1px;height:15px;background:#a0a0a0"></div>
<div style="left:764px;top:261px;width:1px;height:15px;background:#a0a0a0"></div>
<div style="left:796px;top:261px;width:1px;height:15px;background:#a0a0a0"></div>
<div style="left:828px;top:261px;width:1px;height:15px;background:#a0a0a0"></div>
<div style="left:860px;top:261px;width:1px;height:15px;background:#a0a0a0"></div>
<div style="left:891px;top:261px;width:1px;height:15px;background:#a0a0a0"></div>
<div style="left:923px;top:261px;width:1px;height:15px;background:#a0a0a0"></div>
<div style="left:955px;top:261px;width:1px;height:15px;background:#a0a0a0"></div>
<div style="left:987px;top:261px;width:1px;height:15px;background:#a0a0a0"></div>
<div style="left:1019px;top:261px;width:1px;height:15px;background:#a0a0a0"></div>
<div style="left:1051px;top:261px;width:1px;height:15px;background:#a0a0a0"></div>
<div style="left:1083px;top:261px;width:1px;height:15px;background:#a0a0a0"></div>
<div style="left:1115px;top:261px;width:1px;height:15px;background:#a0a0a0"></div>
<div style="left:1146px;top:261px;width:1px;height:15px;background:#a0a0a0"></div>
<div style="left:1178px;top:261px;width:1px;height:15px;background:#a0a0a0"></div>
<div style="left:1210px;top:261px;width:1px;height:15px;background:#a0a0a0"></div>
<div style="left:381px;top:246px;width:1px;height:15px;background:#a0a0a0"></div>
<div style="left:605px;top:246px;width:1px;height:15px;background:#a0a0a0"></div>
<div style="left:828px;top:246px;width:1px;height:15px;background:#a0a0a0"></div>
<div style="left:1051px;top:246px;width:1px;height:15px;background:#a0a0a0"></div>
<span class="t" style="left:258.00px;top:246.11px;font-size:10.5px;line-height:10.5px;color:#000;transform:scaleX(0.8753);transform-origin:0 0;-webkit-text-stroke:0;">22/09</span>
<span class="t" style="left:481.00px;top:246.11px;font-size:10.5px;line-height:10.5px;color:#000;transform:scaleX(0.8753);transform-origin:0 0;-webkit-text-stroke:0;">29/09</span>
<span class="t" style="left:705.00px;top:246.11px;font-size:10.5px;line-height:10.5px;color:#000;transform:scaleX(0.8753);transform-origin:0 0;-webkit-text-stroke:0;">06/10</span>
<span class="t" style="left:1151.00px;top:246.11px;font-size:10.5px;line-height:10.5px;color:#000;transform:scaleX(0.8753);transform-origin:0 0;-webkit-text-stroke:0;">20/10</span>
<span class="t" style="left:262.40px;top:260.61px;font-size:10.5px;line-height:10.5px;color:#000;-webkit-text-stroke:0;">gio</span>
<span class="t" style="left:292.90px;top:260.61px;font-size:10.5px;line-height:10.5px;color:#000;-webkit-text-stroke:0;">ven</span>
<span class="t" style="left:325.40px;top:260.61px;font-size:10.5px;line-height:10.5px;color:#000;transform:scaleX(0.9451);transform-origin:0 0;-webkit-text-stroke:0;">sab</span>
<span class="t" style="left:355.90px;top:260.61px;font-size:10.5px;line-height:10.5px;color:#000;transform:scaleX(0.8812);transform-origin:0 0;-webkit-text-stroke:0;">dom</span>
<span class="t" style="left:388.40px;top:260.61px;font-size:10.5px;line-height:10.5px;color:#000;transform:scaleX(1.1418);transform-origin:0 0;-webkit-text-stroke:0;">lun</span>
<span class="t" style="left:419.90px;top:260.61px;font-size:10.5px;line-height:10.5px;color:#000;transform:scaleX(0.9401);transform-origin:0 0;-webkit-text-stroke:0;">mar</span>
<span class="t" style="left:451.90px;top:260.61px;font-size:10.5px;line-height:10.5px;color:#000;transform:scaleX(0.9401);transform-origin:0 0;-webkit-text-stroke:0;">mer</span>
<span class="t" style="left:485.40px;top:260.61px;font-size:10.5px;line-height:10.5px;color:#000;-webkit-text-stroke:0;">gio</span>
<span class="t" style="left:515.90px;top:260.61px;font-size:10.5px;line-height:10.5px;color:#000;-webkit-text-stroke:0;">ven</span>
<span class="t" style="left:548.40px;top:260.61px;font-size:10.5px;line-height:10.5px;color:#000;transform:scaleX(0.9451);transform-origin:0 0;-webkit-text-stroke:0;">sab</span>
<span class="t" style="left:579.40px;top:260.61px;font-size:10.5px;line-height:10.5px;color:#000;transform:scaleX(0.8812);transform-origin:0 0;-webkit-text-stroke:0;">dom</span>
<span class="t" style="left:611.90px;top:260.61px;font-size:10.5px;line-height:10.5px;color:#000;transform:scaleX(1.1418);transform-origin:0 0;-webkit-text-stroke:0;">lun</span>
<span class="t" style="left:642.90px;top:260.61px;font-size:10.5px;line-height:10.5px;color:#000;transform:scaleX(0.9401);transform-origin:0 0;-webkit-text-stroke:0;">mar</span>
<span class="t" style="left:674.90px;top:260.61px;font-size:10.5px;line-height:10.5px;color:#000;transform:scaleX(0.9401);transform-origin:0 0;-webkit-text-stroke:0;">mer</span>
<span class="t" style="left:708.40px;top:260.61px;font-size:10.5px;line-height:10.5px;color:#000;-webkit-text-stroke:0;">gio</span>
<span class="t" style="left:738.90px;top:260.61px;font-size:10.5px;line-height:10.5px;color:#000;-webkit-text-stroke:0;">ven</span>
<span class="t" style="left:771.40px;top:260.61px;font-size:10.5px;line-height:10.5px;color:#000;transform:scaleX(0.9451);transform-origin:0 0;-webkit-text-stroke:0;">sab</span>
<span class="t" style="left:802.40px;top:260.61px;font-size:10.5px;line-height:10.5px;color:#000;transform:scaleX(0.8812);transform-origin:0 0;-webkit-text-stroke:0;">dom</span>
<span class="t" style="left:835.40px;top:260.61px;font-size:10.5px;line-height:10.5px;color:#000;transform:scaleX(1.1418);transform-origin:0 0;-webkit-text-stroke:0;">lun</span>
<span class="t" style="left:866.40px;top:260.61px;font-size:10.5px;line-height:10.5px;color:#000;transform:scaleX(0.9401);transform-origin:0 0;-webkit-text-stroke:0;">mar</span>
<span class="t" style="left:897.90px;top:260.61px;font-size:10.5px;line-height:10.5px;color:#000;transform:scaleX(0.9401);transform-origin:0 0;-webkit-text-stroke:0;">mer</span>
<span class="t" style="left:931.40px;top:260.61px;font-size:10.5px;line-height:10.5px;color:#000;-webkit-text-stroke:0;">gio</span>
<span class="t" style="left:961.90px;top:260.61px;font-size:10.5px;line-height:10.5px;color:#000;-webkit-text-stroke:0;">ven</span>
<span class="t" style="left:994.40px;top:260.61px;font-size:10.5px;line-height:10.5px;color:#000;transform:scaleX(0.9451);transform-origin:0 0;-webkit-text-stroke:0;">sab</span>
<span class="t" style="left:1025.40px;top:260.61px;font-size:10.5px;line-height:10.5px;color:#000;transform:scaleX(0.8812);transform-origin:0 0;-webkit-text-stroke:0;">dom</span>
<span class="t" style="left:1058.40px;top:260.61px;font-size:10.5px;line-height:10.5px;color:#000;transform:scaleX(1.1418);transform-origin:0 0;-webkit-text-stroke:0;">lun</span>
<span class="t" style="left:1089.90px;top:260.61px;font-size:10.5px;line-height:10.5px;color:#000;transform:scaleX(0.9401);transform-origin:0 0;-webkit-text-stroke:0;">mar</span>
<span class="t" style="left:1121.40px;top:260.61px;font-size:10.5px;line-height:10.5px;color:#000;transform:scaleX(0.9401);transform-origin:0 0;-webkit-text-stroke:0;">mer</span>
<span class="t" style="left:1154.40px;top:260.61px;font-size:10.5px;line-height:10.5px;color:#000;-webkit-text-stroke:0;">gio</span>
<span class="t" style="left:1184.90px;top:260.61px;font-size:10.5px;line-height:10.5px;color:#000;-webkit-text-stroke:0;">ven</span>
<span class="t" style="left:1217.40px;top:260.61px;font-size:10.5px;line-height:10.5px;color:#000;transform:scaleX(0.9451);transform-origin:0 0;-webkit-text-stroke:0;">sab</span>
<div style="left:254px;top:276px;width:988px;height:625px;background:#ffffff"></div>
<div style="left:254px;top:296px;width:988px;height:20px;background-color:#fff;background-image:repeating-conic-gradient(#dedede 0% 25%, #ffffff 0% 50%);background-size:2px 2px;"></div>
<div style="left:254px;top:336px;width:988px;height:20px;background-color:#fff;background-image:repeating-conic-gradient(#dedede 0% 25%, #ffffff 0% 50%);background-size:2px 2px;"></div>
<div style="left:254px;top:376px;width:988px;height:20px;background-color:#fff;background-image:repeating-conic-gradient(#dedede 0% 25%, #ffffff 0% 50%);background-size:2px 2px;"></div>
<div style="left:254px;top:416px;width:988px;height:20px;background-color:#fff;background-image:repeating-conic-gradient(#dedede 0% 25%, #ffffff 0% 50%);background-size:2px 2px;"></div>
<div style="left:254px;top:456px;width:988px;height:20px;background-color:#fff;background-image:repeating-conic-gradient(#dedede 0% 25%, #ffffff 0% 50%);background-size:2px 2px;"></div>
<div style="left:254px;top:496px;width:988px;height:20px;background-color:#fff;background-image:repeating-conic-gradient(#dedede 0% 25%, #ffffff 0% 50%);background-size:2px 2px;"></div>
<div style="left:254px;top:536px;width:988px;height:20px;background-color:#fff;background-image:repeating-conic-gradient(#dedede 0% 25%, #ffffff 0% 50%);background-size:2px 2px;"></div>
<div style="left:254px;top:576px;width:988px;height:20px;background-color:#fff;background-image:repeating-conic-gradient(#dedede 0% 25%, #ffffff 0% 50%);background-size:2px 2px;"></div>
<div style="left:254px;top:616px;width:988px;height:20px;background-color:#fff;background-image:repeating-conic-gradient(#dedede 0% 25%, #ffffff 0% 50%);background-size:2px 2px;"></div>
<div style="left:254px;top:656px;width:988px;height:18px;background-color:#fff;background-image:repeating-conic-gradient(#dedede 0% 25%, #ffffff 0% 50%);background-size:2px 2px;"></div>
<div style="left:254px;top:692px;width:988px;height:18px;background-color:#fff;background-image:repeating-conic-gradient(#dedede 0% 25%, #ffffff 0% 50%);background-size:2px 2px;"></div>
<div style="left:254px;top:728px;width:988px;height:18px;background-color:#fff;background-image:repeating-conic-gradient(#dedede 0% 25%, #ffffff 0% 50%);background-size:2px 2px;"></div>
<div style="left:254px;top:764px;width:988px;height:18px;background-color:#fff;background-image:repeating-conic-gradient(#dedede 0% 25%, #ffffff 0% 50%);background-size:2px 2px;"></div>
<div style="left:254px;top:800px;width:988px;height:18px;background-color:#fff;background-image:repeating-conic-gradient(#dedede 0% 25%, #ffffff 0% 50%);background-size:2px 2px;"></div>
<div style="left:254px;top:836px;width:988px;height:18px;background-color:#fff;background-image:repeating-conic-gradient(#dedede 0% 25%, #ffffff 0% 50%);background-size:2px 2px;"></div>
<div style="left:254px;top:872px;width:988px;height:18px;background-color:#fff;background-image:repeating-conic-gradient(#dedede 0% 25%, #ffffff 0% 50%);background-size:2px 2px;"></div>
<div style="left:318px;top:276px;width:63px;height:625px;background:#fefee1"></div>
<div style="left:318px;top:276px;width:1px;height:625px;background:#a0a0a0"></div>
<div style="left:349px;top:276px;width:1px;height:625px;background:#a8a8a8"></div>
<div style="left:350px;top:276px;width:1px;height:625px;background:#989898"></div>
<div style="left:380px;top:276px;width:1px;height:625px;background:#a0a0a0"></div>
<div style="left:381px;top:276px;width:1px;height:625px;background:#000"></div>
<div style="left:541px;top:276px;width:64px;height:625px;background:#fefee1"></div>
<div style="left:541px;top:276px;width:1px;height:625px;background:#a0a0a0"></div>
<div style="left:572px;top:276px;width:1px;height:625px;background:#a8a8a8"></div>
<div style="left:573px;top:276px;width:1px;height:625px;background:#989898"></div>
<div style="left:604px;top:276px;width:1px;height:625px;background:#a0a0a0"></div>
<div style="left:605px;top:276px;width:1px;height:625px;background:#000"></div>
<div style="left:764px;top:276px;width:64px;height:625px;background:#fefee1"></div>
<div style="left:764px;top:276px;width:1px;height:625px;background:#a0a0a0"></div>
<div style="left:795px;top:276px;width:1px;height:625px;background:#a8a8a8"></div>
<div style="left:796px;top:276px;width:1px;height:625px;background:#989898"></div>
<div style="left:827px;top:276px;width:1px;height:625px;background:#a0a0a0"></div>
<div style="left:828px;top:276px;width:1px;height:625px;background:#000"></div>
<div style="left:987px;top:276px;width:64px;height:625px;background:#fefee1"></div>
<div style="left:987px;top:276px;width:1px;height:625px;background:#a0a0a0"></div>
<div style="left:1018px;top:276px;width:1px;height:625px;background:#a8a8a8"></div>
<div style="left:1019px;top:276px;width:1px;height:625px;background:#989898"></div>
<div style="left:1050px;top:276px;width:1px;height:625px;background:#a0a0a0"></div>
<div style="left:1051px;top:276px;width:1px;height:625px;background:#000"></div>
<div style="left:1210px;top:276px;width:32px;height:625px;background:#fefee1"></div>
<div style="left:1210px;top:276px;width:1px;height:625px;background:#a0a0a0"></div>
<div style="left:380px;top:276px;width:1px;height:625px;background:#a0a0a0"></div>
<div style="left:381px;top:276px;width:1px;height:625px;background:#000"></div>
<div style="left:1083px;top:278px;width:156px;height:1px;background-image:repeating-linear-gradient(90deg,#000 0 1px,transparent 1px 2px)"></div>
<div style="left:256px;top:898px;width:985px;height:1px;background-image:repeating-linear-gradient(90deg,#000 0 1px,transparent 1px 2px)"></div>
<div style="left:256px;top:282px;width:1px;height:617px;background-image:repeating-linear-gradient(180deg,#000 0 1px,transparent 1px 2px)"></div>
<div style="left:1239px;top:278px;width:1px;height:621px;background-image:repeating-linear-gradient(180deg,#000 0 1px,transparent 1px 2px)"></div>
<div style="left:1241px;top:276px;width:1px;height:625px;background:#a8a8a8"></div>
<div style="left:254px;top:277px;width:829px;height:4px;background:#0000ff;border-top:1px solid #000;border-bottom:1px solid #000"></div>
<svg style="left:254px;top:277px;" width="13" height="10" viewBox="0 0 13 10"><path d="M0.5 1V3.5L5.5 8.5L10.5 3.5H13V1Z" fill="#0000ff"/><path d="M0.5 0V3.5L5.5 8.5L10.5 3.5H13" fill="none" stroke="#000"/></svg>
<svg style="left:1070px;top:277px;" width="13" height="10" viewBox="0 0 13 10"><path d="M12.5 1V3.5L7.5 8.5L2.5 3.5H0V1Z" fill="#0000ff"/><path d="M12.5 0V3.5L7.5 8.5L2.5 3.5H0" fill="none" stroke="#000"/></svg>
<div style="left:254px;top:297px;width:829px;height:18px;background:#0000ff;border:1px solid #000;"></div>
<div style="left:254px;top:317px;width:829px;height:4px;background:#0000ff;border-top:1px solid #000;border-bottom:1px solid #000"></div>
<svg style="left:254px;top:317px;" width="13" height="10" viewBox="0 0 13 10"><path d="M0.5 1V3.5L5.5 8.5L10.5 3.5H13V1Z" fill="#0000ff"/><path d="M0.5 0V3.5L5.5 8.5L10.5 3.5H13" fill="none" stroke="#000"/></svg>
<svg style="left:1070px;top:317px;" width="13" height="10" viewBox="0 0 13 10"><path d="M12.5 1V3.5L7.5 8.5L2.5 3.5H0V1Z" fill="#0000ff"/><path d="M12.5 0V3.5L7.5 8.5L2.5 3.5H0" fill="none" stroke="#000"/></svg>
<div style="left:254px;top:337px;width:829px;height:18px;background:#ff0000;border:1px solid #000;"></div>
<div style="left:445px;top:357px;width:797px;height:4px;background:#0000ff;border-top:1px solid #000;border-bottom:1px solid #000"></div>
<svg style="left:445px;top:357px;" width="13" height="10" viewBox="0 0 13 10"><path d="M0.5 1V3.5L5.5 8.5L10.5 3.5H13V1Z" fill="#0000ff"/><path d="M0.5 0V3.5L5.5 8.5L10.5 3.5H13" fill="none" stroke="#000"/></svg>
<div style="left:445px;top:377px;width:797px;height:18px;background:#ff0000;border:1px solid #000;border-right:none;"></div>
<div style="left:445px;top:397px;width:797px;height:18px;background:#ff0000;border:1px solid #000;border-right:none;"></div>
<div style="left:286px;top:417px;width:892px;height:4px;background:#0000ff;border-top:1px solid #000;border-bottom:1px solid #000"></div>
<svg style="left:286px;top:417px;" width="13" height="10" viewBox="0 0 13 10"><path d="M0.5 1V3.5L5.5 8.5L10.5 3.5H13V1Z" fill="#0000ff"/><path d="M0.5 0V3.5L5.5 8.5L10.5 3.5H13" fill="none" stroke="#000"/></svg>
<svg style="left:1165px;top:417px;" width="13" height="10" viewBox="0 0 13 10"><path d="M12.5 1V3.5L7.5 8.5L2.5 3.5H0V1Z" fill="#0000ff"/><path d="M12.5 0V3.5L7.5 8.5L2.5 3.5H0" fill="none" stroke="#000"/></svg>
<div style="left:286px;top:437px;width:892px;height:18px;background:#ff0000;border:1px solid #000;"></div>
<div style="left:413px;top:457px;width:829px;height:4px;background:#0000ff;border-top:1px solid #000;border-bottom:1px solid #000"></div>
<svg style="left:413px;top:457px;" width="13" height="10" viewBox="0 0 13 10"><path d="M0.5 1V3.5L5.5 8.5L10.5 3.5H13V1Z" fill="#0000ff"/><path d="M0.5 0V3.5L5.5 8.5L10.5 3.5H13" fill="none" stroke="#000"/></svg>
<div style="left:413px;top:477px;width:829px;height:18px;background:#00ff00;border:1px solid #000;border-right:none;"></div>
<div style="left:509px;top:497px;width:733px;height:4px;background:#0000ff;border-top:1px solid #000;border-bottom:1px solid #000"></div>
<svg style="left:509px;top:497px;" width="13" height="10" viewBox="0 0 13 10"><path d="M0.5 1V3.5L5.5 8.5L10.5 3.5H13V1Z" fill="#0000ff"/><path d="M0.5 0V3.5L5.5 8.5L10.5 3.5H13" fill="none" stroke="#000"/></svg>
<div style="left:509px;top:517px;width:733px;height:18px;background:#ff0000;border:1px solid #000;border-right:none;"></div>
<div style="left:381px;top:537px;width:861px;height:4px;background:#0000ff;border-top:1px solid #000;border-bottom:1px solid #000"></div>
<svg style="left:891px;top:537px;" width="13" height="10" viewBox="0 0 13 10"><path d="M0.5 1V3.5L5.5 8.5L10.5 3.5H13V1Z" fill="#0000ff"/><path d="M0.5 0V3.5L5.5 8.5L10.5 3.5H13" fill="none" stroke="#000"/></svg>
<svg style="left:1070px;top:537px;" width="13" height="10" viewBox="0 0 13 10"><path d="M12.5 1V3.5L7.5 8.5L2.5 3.5H0V1Z" fill="#0000ff"/><path d="M12.5 0V3.5L7.5 8.5L2.5 3.5H0" fill="none" stroke="#000"/></svg>
<div style="left:891px;top:557px;width:192px;height:18px;background:#ff0000;border:1px solid #000;"></div>
<div style="left:445px;top:577px;width:797px;height:18px;background:#0000ff;border:1px solid #000;border-right:none;"></div>
<div style="left:381px;top:597px;width:861px;height:18px;background:#0000ff;border:1px solid #000;border-right:none;"></div>
<div style="left:509px;top:617px;width:733px;height:4px;background:#0000ff;border-top:1px solid #000;border-bottom:1px solid #000"></div>
<svg style="left:509px;top:617px;" width="13" height="10" viewBox="0 0 13 10"><path d="M0.5 1V3.5L5.5 8.5L10.5 3.5H13V1Z" fill="#0000ff"/><path d="M0.5 0V3.5L5.5 8.5L10.5 3.5H13" fill="none" stroke="#000"/></svg>
<div style="left:509px;top:637px;width:733px;height:18px;background:#00ff00;border:1px solid #000;border-right:none;"></div>
<div style="left:258px;top:279px;width:821px;height:1px;background-image:repeating-linear-gradient(90deg,#d0d0e8 0 1px,transparent 1px 2px)"></div>
<div style="left:255px;top:292px;width:825px;height:1px;background-image:repeating-linear-gradient(90deg,#666 0 1px,transparent 1px 2px)"></div>
<div style="left:254px;top:290px;width:5px;height:5px;background:#000"></div>
<div style="left:1078px;top:290px;width:5px;height:5px;background:#000"></div>
<div style="left:1078px;top:277px;width:5px;height:5px;background:#000"></div>
<div style="left:254px;top:277px;width:5px;height:5px;background:#000"></div>
<div style="left:252px;top:901px;width:990px;height:2px;background:#f0f0f0"></div>
<div style="left:1242px;top:231px;width:33px;height:652px;background:#f0f0f0"></div>
<svg style="left:1250px;top:236px;" width="16" height="13" viewBox="0 0 16 13"><path d="M2 6A5.5 5 0 0 1 12.5 3.5" fill="none" stroke="#6aa6de" stroke-width="2.4"/><path d="M14 7A5.5 5 0 0 1 3.5 9.5" fill="none" stroke="#6aa6de" stroke-width="2.4"/><path d="M10 4.5L15 5.2L14.3 0Z" fill="#6aa6de"/><path d="M6 8.5L1 7.8L1.7 13Z" fill="#6aa6de"/></svg>
<div style="left:1242px;top:255px;width:33px;height:1px;background:#b8b8b8"></div>
<svg style="left:1251px;top:261px;" width="15" height="15" viewBox="0 0 15 15"><rect x="1" y="0.5" width="5" height="2.5" rx="1" fill="#f0b070" stroke="#d08040" stroke-width="0.6"/><rect x="1" y="4.5" width="8" height="2.5" rx="1" fill="#a0c060" stroke="#709030" stroke-width="0.6"/><rect x="1" y="8.5" width="13" height="2.5" rx="1" fill="#70b0e8" stroke="#4080c0" stroke-width="0.6"/><rect x="1" y="12.5" width="9" height="2.5" rx="1" fill="#e87060" stroke="#c04030" stroke-width="0.6"/></svg>
<svg style="left:1245px;top:283px;" width="16" height="16" viewBox="0 0 16 16"><defs><radialGradient id="pg" cx="0.35" cy="0.35" r="0.7"><stop offset="0" stop-color="#fbe0e0"/><stop offset="1" stop-color="#e08a8a"/></radialGradient></defs><circle cx="7.5" cy="7.5" r="7.2" fill="url(#pg)" stroke="#d89090" stroke-width="0.6"/><path d="M7.5 7.5L13.1 2.8A7.2 7.2 0 0 1 13.8 11.1Z" fill="#b8d8f0"/><path d="M7.5 7.5L13.8 11.1A7.2 7.2 0 0 1 6.9 14.7Z" fill="#f4d0a8"/></svg>
<svg style="left:1266px;top:289px;" width="7" height="4" viewBox="0 0 7 4"><path d="M0 0H7L3.5 3.5Z" fill="#000"/></svg>
<div style="left:1242px;top:303px;width:33px;height:1px;background:#b8b8b8"></div>
<div style="left:1247px;top:307px;width:23px;height:22px;background:#d6e2ee;border:1px solid #1a7fe0"></div>
<svg style="left:1250px;top:309px;" width="17" height="17" viewBox="0 0 17 17"><rect x="3.5" y="10.5" width="13" height="4" fill="#ffff00" stroke="#808080"/><path d="M1 3.5L4 0.5L8 4.5L5 7.5Z" fill="#000"/><path d="M5 7.5L8 4.5L9.6 6.1L6.6 9.1Z" fill="#00e0e8"/><path d="M6.6 9.1L9.6 6.1L14 10L15.2 13L12.5 14.8L9 13.5Z" fill="#ffff90" stroke="#000" stroke-width="0.9"/><path d="M11 9L13 12M9.5 10L11.5 13" stroke="#000" stroke-width="0.7"/></svg>
<svg style="left:1251px;top:332px;" width="15" height="15" viewBox="0 0 15 15"><rect x="0.5" y="7.5" width="14" height="5" fill="#f8e860" stroke="#c0b040" stroke-width="0.6"/><text x="7.5" y="10" font-size="12" font-weight="bold" fill="#e03030" text-anchor="middle" font-family="Liberation Sans">?</text></svg>
<svg style="left:1251px;top:355px;" width="15" height="15" viewBox="0 0 15 15"><rect x="0.5" y="4.5" width="14" height="6" fill="#f8e860" stroke="#c0b040" stroke-width="0.6"/><path d="M6 0V15M9 0V15" stroke="#3a50a0" stroke-width="1.3"/></svg>
<svg style="left:1251px;top:377px;" width="15" height="15" viewBox="0 0 15 15"><rect x="0.5" y="0.5" width="9" height="5" fill="#f8e860" stroke="#a0a040" stroke-width="0.6"/><rect x="5.5" y="9.5" width="9" height="5" fill="#f8e860" stroke="#a0a040" stroke-width="0.6"/><path d="M9.5 3H13V7H3V12H5.5" fill="none" stroke="#404040" stroke-width="1"/></svg>
<div style="left:1242px;top:395px;width:33px;height:1px;background:#b8b8b8"></div>
<svg style="left:1250px;top:403px;" width="15" height="15" viewBox="0 0 15 15"><rect x="0.5" y="0.5" width="14" height="14" fill="#fafafa" stroke="#b8b8c8"/><rect x="0.5" y="0.5" width="14" height="3" fill="#e88080"/><path d="M3 6.5H12M3 9H12M3 11.5H12M4.5 5.5V13M7.5 5.5V13M10.5 5.5V13" stroke="#b0b8e0" stroke-width="0.7"/></svg>
<svg style="left:1250px;top:424px;" width="16" height="17" viewBox="0 0 16 17"><path d="M0.5 3.5L5 1L10.5 3.5L15.5 1V13.5L10.5 16L5 13.5L0.5 16Z" fill="#c0dcf0" stroke="#7890a8"/><path d="M5 1V13.5M10.5 3.5V16" stroke="#8098b0"/><path d="M5 6L8 10L13 6V12L8 13L5 10Z" fill="#80c880"/></svg>
<div style="left:1242px;top:446px;width:33px;height:1px;background:#b8b8b8"></div>
<svg style="left:1250px;top:451px;" width="16" height="16" viewBox="0 0 16 16"><rect x="0.5" y="3.5" width="11" height="12" fill="#506080" stroke="#304060" stroke-width="0.6"/><rect x="3" y="4" width="6" height="4" fill="#e0e8f0"/><rect x="2.5" y="10" width="7" height="5" fill="#b0c8e0"/><path d="M8 5H11V2L16 6.5L11 11V8H8Z" fill="#90d850" stroke="#50a020" stroke-width="0.7"/></svg>
<div style="left:1242px;top:473px;width:33px;height:1px;background:#b8b8b8"></div>
<svg style="left:1250px;top:479px;" width="16" height="16" viewBox="0 0 16 16"><circle cx="8" cy="8" r="7.5" fill="#606060"/><path d="M3 10L8 5L13 10M5 12L8 9L11 12" fill="none" stroke="#d0d0d0" stroke-width="1.3"/><circle cx="8" cy="5.5" r="1.5" fill="#f0c030"/></svg>
<svg style="left:1250px;top:500px;" width="16" height="17" viewBox="0 0 16 17"><rect x="0" y="0" width="16" height="17" rx="4" fill="#1a9a8a" opacity="0.85"/><text x="8" y="12" font-size="7.5" fill="#fff" text-anchor="middle" font-family="Liberation Sans" font-weight="bold">CSE</text></svg>
<svg style="left:1246px;top:522px;" width="15" height="16" viewBox="0 0 15 16"><rect x="3.5" y="0.5" width="8" height="6" fill="#f6f8fb" stroke="#90a0c0"/><rect x="0.5" y="5.5" width="14" height="6" rx="1.5" fill="#b8c8e0" stroke="#8098c0"/><rect x="3.5" y="9.5" width="8" height="6" fill="#f0f4fa" stroke="#8098c0"/></svg>
<svg style="left:1266px;top:528px;" width="7" height="4" viewBox="0 0 7 4"><path d="M0 0H7L3.5 3.5Z" fill="#000"/></svg>
<div style="left:381px;top:280px;width:332px;height:489px;background:rgba(0,0,0,0.28);filter:blur(1px)"></div>
<div style="left:379px;top:278px;width:331px;height:488px;background:#f0f0f0;border:1px solid #979797"></div>
<span class="t" style="left:404.30px;top:285.14px;font-size:12px;line-height:12px;color:#000;transform:scaleX(1.0059);transform-origin:0 0;">Appendi</span>
<svg style="left:696px;top:286px;" width="5" height="8" viewBox="0 0 5 8"><path d="M0 0L4.5 4L0 8Z" fill="#000"/></svg>
<span class="t" style="left:404.30px;top:304.14px;font-size:12px;line-height:12px;color:#000;transform:scaleX(0.9316);transform-origin:0 0;">Inserisci</span>
<svg style="left:696px;top:305px;" width="5" height="8" viewBox="0 0 5 8"><path d="M0 0L4.5 4L0 8Z" fill="#000"/></svg>
<div style="left:383px;top:322px;width:323px;height:1px;background:#b4b4b4"></div>
<div style="left:383px;top:323px;width:323px;height:1px;background:#ffffff"></div>
<span class="t" style="left:404.30px;top:331.14px;font-size:12px;line-height:12px;color:#000;">Duplica</span>
<span class="t" style="left:684.00px;top:331.14px;font-size:12px;line-height:12px;color:#000;transform:scaleX(0.8569);transform-origin:0 0;">F7</span>
<svg style="left:384px;top:329px;" width="15" height="15" viewBox="0 0 15 15"><rect x="0.5" y="0.5" width="8" height="8" fill="#9fd05a" stroke="#5c9a2a"/><rect x="5.5" y="5.5" width="8.5" height="8.5" fill="#8cc040" stroke="#5c9a2a"/></svg>
<span class="t" style="left:404.30px;top:350.14px;font-size:12px;line-height:12px;color:#000;transform:scaleX(0.9657);transform-origin:0 0;">Elimina</span>
<span class="t" style="left:653.00px;top:350.14px;font-size:12px;line-height:12px;color:#000;transform:scaleX(0.9845);transform-origin:0 0;">Ctrl+Del</span>
<svg style="left:386px;top:354px;" width="11" height="4" viewBox="0 0 11 4"><rect x="0.5" y="0.5" width="10" height="3" fill="#ff5a2a" stroke="#e04a20"/></svg>
<div style="left:383px;top:368px;width:323px;height:1px;background:#b4b4b4"></div>
<div style="left:383px;top:369px;width:323px;height:1px;background:#ffffff"></div>
<span class="t" style="left:404.30px;top:377.14px;font-size:12px;line-height:12px;color:#000;transform:scaleX(0.9668);transform-origin:0 0;">Visualizza dettaglio ...</span>
<span class="t" style="left:684.00px;top:377.14px;font-size:12px;line-height:12px;color:#000;transform:scaleX(0.8569);transform-origin:0 0;">F2</span>
<div style="left:383px;top:395px;width:323px;height:1px;background:#b4b4b4"></div>
<div style="left:383px;top:396px;width:323px;height:1px;background:#ffffff"></div>
<span class="t" style="left:404.30px;top:404.14px;font-size:12px;line-height:12px;color:#000;">Aggiorna Gantt</span>
<svg style="left:384px;top:403px;" width="15" height="13" viewBox="0 0 15 13"><path d="M2 6A5.5 5 0 0 1 12 3.5" fill="none" stroke="#3a8ad0" stroke-width="2.2"/><path d="M13 7A5.5 5 0 0 1 3 9.5" fill="none" stroke="#3a8ad0" stroke-width="2.2"/><path d="M9.5 4.5L14 5L13.5 0.5Z" fill="#3a8ad0"/><path d="M5.5 8.5L1 8L1.5 12.5Z" fill="#3a8ad0"/></svg>
<span class="t" style="left:404.30px;top:423.14px;font-size:12px;line-height:12px;color:#000;transform:scaleX(0.9609);transform-origin:0 0;">Visualizza Gantt a pagina intera</span>
<svg style="left:385px;top:421px;" width="14" height="15" viewBox="0 0 14 15"><rect x="1" y="1" width="4" height="2" fill="#f0a050"/><rect x="1" y="4.5" width="7" height="2" fill="#90b050"/><rect x="1" y="8" width="12" height="2" fill="#50a0e0"/><rect x="1" y="11.5" width="8" height="2" fill="#e06050"/></svg>
<span class="t" style="left:404.30px;top:442.14px;font-size:12px;line-height:12px;color:#000;transform:scaleX(0.9691);transform-origin:0 0;">Espandi tutte le fasi</span>
<span class="t" style="left:404.30px;top:461.14px;font-size:12px;line-height:12px;color:#000;">Chiudi tutte le fasi</span>
<div style="left:383px;top:479px;width:323px;height:1px;background:#b4b4b4"></div>
<div style="left:383px;top:480px;width:323px;height:1px;background:#ffffff"></div>
<span class="t" style="left:404.30px;top:488.14px;font-size:12px;line-height:12px;color:#000;transform:scaleX(0.9537);transform-origin:0 0;">Sposta fasi lavorative ...</span>
<span class="t" style="left:404.30px;top:507.14px;font-size:12px;line-height:12px;color:#000;transform:scaleX(0.9773);transform-origin:0 0;">Sposta fasi lavorative ricadenti in un range di date ...</span>
<span class="t" style="left:404.30px;top:526.14px;font-size:12px;line-height:12px;color:#000;transform:scaleX(0.9939);transform-origin:0 0;">Imposta interruzione temporale di cantiere ...</span>
<span class="t" style="left:404.30px;top:545.14px;font-size:12px;line-height:12px;color:#000;transform:scaleX(0.9949);transform-origin:0 0;">Riordina diagramma</span>
<svg style="left:696px;top:546px;" width="5" height="8" viewBox="0 0 5 8"><path d="M0 0L4.5 4L0 8Z" fill="#000"/></svg>
<div style="left:383px;top:563px;width:323px;height:1px;background:#b4b4b4"></div>
<div style="left:383px;top:564px;width:323px;height:1px;background:#ffffff"></div>
<span class="t" style="left:404.30px;top:572.14px;font-size:12px;line-height:12px;color:#000;transform:scaleX(0.9821);transform-origin:0 0;">Calendario</span>
<svg style="left:384px;top:570px;" width="15" height="15" viewBox="0 0 15 15"><rect x="0.5" y="1.5" width="14" height="13" fill="#fafafa" stroke="#b0b0c8"/><rect x="0.5" y="1.5" width="14" height="3" fill="#e87070"/><path d="M3 7H12M3 9.5H12M3 12H12M4.5 6V13M7.5 6V13M10.5 6V13" stroke="#a8b0e0" stroke-width="0.8"/></svg>
<span class="t" style="left:404.30px;top:591.14px;font-size:12px;line-height:12px;color:#000;transform:scaleX(0.9506);transform-origin:0 0;">Zone</span>
<svg style="left:384px;top:588px;" width="15" height="16" viewBox="0 0 15 16"><path d="M0.5 3L5 1L10 3L14.5 1V13L10 15L5 13L0.5 15Z" fill="#b8d8f0" stroke="#7890a8"/><path d="M5 1V13M10 3V15" stroke="#7890a8"/><path d="M5 5L8 9L12 6V11L8 12L5 9Z" fill="#70c070"/></svg>
<div style="left:383px;top:609px;width:323px;height:1px;background:#b4b4b4"></div>
<div style="left:383px;top:610px;width:323px;height:1px;background:#ffffff"></div>
<span class="t" style="left:404.30px;top:618.14px;font-size:12px;line-height:12px;color:#000;transform:scaleX(0.9734);transform-origin:0 0;">Aggiorna diagramma di Gantt su Euclide CSE</span>
<svg style="left:384px;top:616px;" width="15" height="15" viewBox="0 0 15 15"><rect x="0" y="0" width="15" height="15" rx="3" fill="#149a88"/><text x="7.5" y="10.5" font-size="7" fill="#fff" text-anchor="middle" font-family="Liberation Sans">CSE</text></svg>
<span class="t" style="left:404.30px;top:637.14px;font-size:12px;line-height:12px;color:#a6a6a6;transform:scaleX(0.9729);transform-origin:0 0;">Annulla collegamento su Euclide CSE</span>
<div style="left:383px;top:655px;width:323px;height:1px;background:#b4b4b4"></div>
<div style="left:383px;top:656px;width:323px;height:1px;background:#ffffff"></div>
<span class="t" style="left:404.30px;top:664.14px;font-size:12px;line-height:12px;color:#000;">Esporta diagramma in formato GanttProject</span>
<div style="left:383px;top:682px;width:323px;height:1px;background:#b4b4b4"></div>
<div style="left:383px;top:683px;width:323px;height:1px;background:#ffffff"></div>
<span class="t" style="left:404.30px;top:691.14px;font-size:12px;line-height:12px;color:#000;transform:scaleX(0.9924);transform-origin:0 0;">Imposta inizio del periodo selezionato</span>
<span class="t" style="left:404.30px;top:710.14px;font-size:12px;line-height:12px;color:#000;transform:scaleX(0.8996);transform-origin:0 0;">Azzera Gantt</span>
<span class="t" style="left:404.30px;top:729.14px;font-size:12px;line-height:12px;color:#000;transform:scaleX(0.9881);transform-origin:0 0;">Azzera tutti i collegamenti fra le fasi</span>
<span class="t" style="left:404.30px;top:748.14px;font-size:12px;line-height:12px;color:#000;transform:scaleX(0.9724);transform-origin:0 0;">Creazione guidata Gantt</span>
<svg style="left:696px;top:749px;" width="5" height="8" viewBox="0 0 5 8"><path d="M0 0L4.5 4L0 8Z" fill="#000"/></svg>
<div style="left:853px;top:180px;width:183px;height:77px;background:#fffb9c;border:1px solid #222;border-radius:10px;"></div>
<span class="t" style="left:859.80px;top:209.14px;font-size:20.5px;line-height:20.5px;color:#1a1a1a;transform:scaleX(0.9105);transform-origin:0 0;">Menu OPERAZIONI</span>
<div style="left:1036px;top:219px;width:113px;height:2px;background:#000"></div>
<svg style="left:1147px;top:214px;" width="12" height="12" viewBox="0 0 12 12"><path d="M0 0L11.5 6L0 12Z" fill="#000"/></svg>
<div style="left:942px;top:447px;width:184px;height:76px;background:#fffb9c;border:1px solid #222;border-radius:10px;"></div>
<span class="t" style="left:984.00px;top:461.34px;font-size:20.5px;line-height:20.5px;color:#1a1a1a;transform:scaleX(0.9784);transform-origin:0 0;">Barra degli</span>
<span class="t" style="left:989.60px;top:490.94px;font-size:20.5px;line-height:20.5px;color:#1a1a1a;transform:scaleX(1.0249);transform-origin:0 0;">strumenti</span>
<div style="left:1126px;top:485px;width:116px;height:2px;background:#000"></div>
<svg style="left:1239px;top:480px;" width="12" height="12" viewBox="0 0 12 12"><path d="M0 0L11.5 6L0 12Z" fill="#000"/></svg>
<div style="left:71px;top:630px;width:184px;height:77px;background:#fffb9c;border:1px solid #222;border-radius:10px;"></div>
<span class="t" style="left:80.00px;top:653.24px;font-size:20.5px;line-height:20.5px;color:#1a1a1a;transform:scaleX(1.0208);transform-origin:0 0;">Menu contestuale</span>
<div style="left:255px;top:666px;width:112px;height:2px;background:#000"></div>
<svg style="left:365px;top:661px;" width="12" height="12" viewBox="0 0 12 12"><path d="M0 0L11.5 6L0 12Z" fill="#000"/></svg>
<div style="left:1px;top:903px;width:1274px;height:18px;background:#f0f0f0;border-top:1px solid #a8a8a8"></div>
<div style="left:1px;top:904px;width:1274px;height:1px;background:#f8f8f8"></div>
<span class="t" style="left:4.00px;top:905.64px;font-size:12px;line-height:12px;color:#1a1a1a;transform:scaleX(0.9572);transform-origin:0 0;">Visualizza il calendario</span>
<div style="left:960px;top:903px;width:1px;height:18px;background:#c8c8c8"></div>
<div style="left:963px;top:903px;width:66px;height:18px;border-left:1px solid #a0a0a0;border-top:1px solid #a0a0a0"></div>
<span class="t" style="left:974.30px;top:905.34px;font-size:12px;line-height:12px;color:#000;transform:scaleX(0.9220);transform-origin:0 0;">v. 22.01h</span>
<div style="left:1032px;top:903px;width:158px;height:18px;border-left:1px solid #a0a0a0;border-top:1px solid #a0a0a0"></div>
<div style="left:1191px;top:903px;width:34px;height:18px;border-left:1px solid #a0a0a0;border-top:1px solid #a0a0a0"></div>
<span class="t" style="left:1195.00px;top:905.34px;font-size:12px;line-height:12px;color:#a6a6a6;transform:scaleX(0.9000);transform-origin:0 0;">MAIU</span>
<div style="left:1226px;top:903px;width:33px;height:18px;border-left:1px solid #a0a0a0;border-top:1px solid #a0a0a0"></div>
<span class="t" style="left:1230.00px;top:905.34px;font-size:12px;line-height:12px;color:#000;transform:scaleX(0.9514);transform-origin:0 0;">NUM</span>
<svg style="left:1258px;top:905px;" width="15" height="15" viewBox="0 0 15 15"><path d="M14 3L3 14M14 7L7 14M14 11L11 14" stroke="#a0a0a0" stroke-width="1"/></svg>
<div style="left:0px;top:0px;width:1276px;height:922px;border:1px solid #234b88;pointer-events:none;z-index:10"></div></body></html>
